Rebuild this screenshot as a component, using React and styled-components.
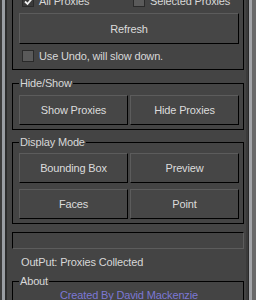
import styled, { createGlobalStyle } from "styled-components";

const Global = createGlobalStyle`
  html, body { margin: 0; padding: 0; background: #444444; }
  body {
    width: 256px;
    height: 300px;
    overflow: hidden;
    font-family: "Liberation Sans", Arial, sans-serif;
    font-size: 11px;
    letter-spacing: -0.15px;
    color: #d8d8d8;
  }
`;

const Frame = styled.div`
  display: flex;
  height: 300px;
  overflow: hidden;
`;

const LeftEdge = styled.div`
  flex: none;
  width: 7px;
  background: linear-gradient(to right, #3c3c3c 0 2px, #9a9ea4 2px 5px, #2c2c2c 5px 7px);
`;

const ScrollEdge = styled.div`
  flex: none;
  width: 10px;
  background: linear-gradient(to right, #3a3a3a 0 2px, #2a2a2a 2px 3px, #a4a6aa 3px 6px, #6a6a6a 6px 10px);
`;

const Panel = styled.div`
  flex: 1;
  display: flex;
  flex-direction: column;
  margin-top: -13px;
  background: #444444;
  & > * { flex: none; }
`;

const Rollout = styled.div`
  margin: 0 2px 0 5px;
  border: 1px solid #000;
  padding: 6px 4px 7px 6px;
  display: flex;
  flex-direction: column;
`;

const CheckRow = styled.div`
  display: grid;
  grid-template-columns: 1fr 1fr;
  gap: 2px;
  height: ${(p) => p.$h || 14}px;
  margin-top: ${(p) => p.$top || 0}px;
`;

const CheckLabel = styled.label`
  display: flex;
  align-items: center;
  gap: 5px;
  padding-left: 3px;
  line-height: 12px;
  white-space: nowrap;
`;

const Box = styled.span`
  flex: none;
  width: 10px;
  height: 10px;
  border: 1px solid #2a2a2a;
  background: ${(p) => (p.$checked ? "#3a3a3a" : "#5a5a5a")};
  display: flex;
  align-items: center;
  justify-content: center;
`;

const Button = styled.div`
  box-sizing: border-box;
  height: ${(p) => p.$h || 30}px;
  display: flex;
  align-items: center;
  justify-content: center;
  background: #464646;
  border-top: 1px solid #5c5c5c;
  border-left: 1px solid #5c5c5c;
  border-right: 1px solid #000;
  border-bottom: 1px solid #000;
  color: #dcdcdc;
  margin-top: ${(p) => p.$top || 0}px;
`;

const ButtonGrid = styled.div`
  display: grid;
  grid-template-columns: 1fr 1fr;
  column-gap: 2px;
  row-gap: 6px;
`;

const Group = styled.fieldset`
  margin: ${(p) => p.$top}px 2px 0 5px;
  border: 1px solid #000;
  padding: ${(p) => p.$pt}px 4px 4px 6px;
  min-width: 0;
`;

const Legend = styled.legend`
  padding: 0 1px;
  line-height: 13px;
  color: #d8d8d8;
`;

const Progress = styled.div`
  margin: 8px 2px 0 5px;
  height: 17px;
  box-sizing: border-box;
  background: #444444;
  border-top: 1px solid #000;
  border-left: 1px solid #000;
  border-right: 1px solid #5c5c5c;
  border-bottom: 1px solid #5c5c5c;
`;

const Status = styled.div`
  margin-top: 7px;
  padding-left: 14px;
  line-height: 13px;
`;

const Credit = styled.div`
  text-align: center;
  color: #7c78d4;
  line-height: 13px;
`;

const Check = ({ checked, children }) => (
  <CheckLabel>
    <Box $checked={checked}>
      {checked && (
        <svg width="9" height="9" viewBox="0 0 9 9">
          <polyline points="1,4.5 3.5,7 8,1.5" fill="none" stroke="#f0f0f0" strokeWidth="1.8" />
        </svg>
      )}
    </Box>
    {children}
  </CheckLabel>
);

export default function App() {
  return (
    <Frame>
      <Global />
      <LeftEdge />
      <Panel>
        <Rollout>
          <CheckRow>
            <Check checked>All Proxies</Check>
            <Check>Selected Proxies</Check>
          </CheckRow>
          <Button $h={31} $top={5}>Refresh</Button>
          <CheckRow $top={6} $h={12}>
            <Check>Use Undo, will slow down.</Check>
          </CheckRow>
        </Rollout>

        <Group $top={7} $pt={5}>
          <Legend>Hide/Show</Legend>
          <ButtonGrid>
            <Button>Show Proxies</Button>
            <Button>Hide Proxies</Button>
          </ButtonGrid>
        </Group>

        <Group $top={6} $pt={4}>
          <Legend>Display Mode</Legend>
          <ButtonGrid>
            <Button>Bounding Box</Button>
            <Button>Preview</Button>
            <Button>Faces</Button>
            <Button>Point</Button>
          </ButtonGrid>
        </Group>

        <Progress />
        <Status>OutPut: Proxies Collected</Status>

        <Group $top={6} $pt={1}>
          <Legend>About</Legend>
          <Credit>Created By David Mackenzie</Credit>
        </Group>
      </Panel>
      <ScrollEdge />
    </Frame>
  );
}
